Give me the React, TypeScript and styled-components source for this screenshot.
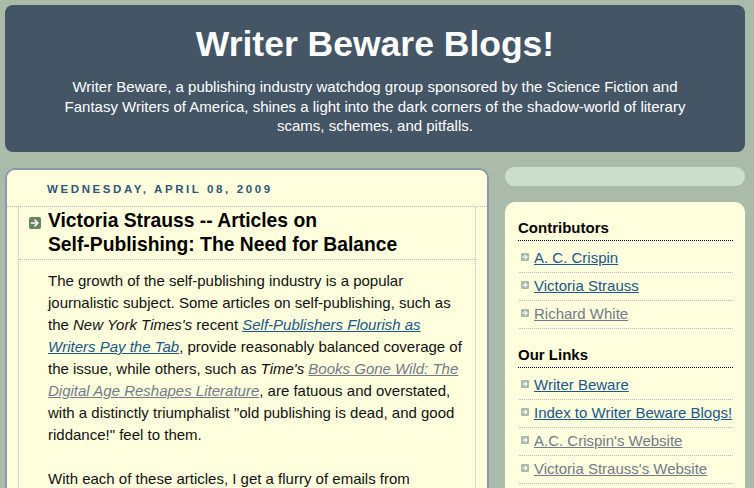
import React from "react";
import styled, { createGlobalStyle } from "styled-components";

const GlobalStyle = createGlobalStyle`
  body {
    margin: 0;
    background: #aabbaa;
    font-family: "Liberation Sans", Arial, sans-serif;
  }
`;

interface ILink {
  label: string;
  visited?: boolean;
}

const contributors: ILink[] = [
  { label: "A. C. Crispin" },
  { label: "Victoria Strauss" },
  { label: "Richard White", visited: true },
];

const ourLinks: ILink[] = [
  { label: "Writer Beware" },
  { label: "Index to Writer Beware Blogs!" },
  { label: "A.C. Crispin's Website", visited: true },
  { label: "Victoria Strauss's Website", visited: true },
];

const ArrowIcon: React.FC<{ size: number; color: string }> = ({ size, color }) => (
  <svg width={size} height={size} viewBox="0 0 12 12">
    <rect x="0" y="0" width="12" height="12" rx="2" fill={color} />
    <path
      d="M2.5 6h6M6 3.2L8.8 6 6 8.8"
      stroke="#fff"
      strokeWidth="1.7"
      fill="none"
      strokeLinecap="round"
      strokeLinejoin="round"
    />
  </svg>
);

const Widget: React.FC<{ title: string; links: ILink[] }> = ({ title, links }) => (
  <WidgetWrap>
    <WidgetTitle>{title}</WidgetTitle>
    <LinkList>
      {links.map((link) => (
        <LinkItem key={link.label}>
          <ItemIcon>
            <ArrowIcon size={8} color="#a9b9a7" />
          </ItemIcon>
          <Link href="#" $visited={link.visited}>
            {link.label}
          </Link>
        </LinkItem>
      ))}
    </LinkList>
  </WidgetWrap>
);

const App: React.FC = () => {
  return (
    <Page>
      <GlobalStyle />
      <Header>
        <BlogTitle>Writer Beware Blogs!</BlogTitle>
        <Description>
          Writer Beware, a publishing industry watchdog group sponsored by the
          Science Fiction and Fantasy Writers of America, shines a light into
          the dark corners of the shadow-world of literary scams, schemes, and
          pitfalls.
        </Description>
      </Header>
      <Columns>
        <Main>
          <DateHeader>Wednesday, April 08, 2009</DateHeader>
          <Post>
            <PostTitle>
              <TitleIcon>
                <ArrowIcon size={12} color="#66855f" />
              </TitleIcon>
              <span>
                Victoria Strauss -- Articles on <NoWrap>Self-Publishing:</NoWrap>{" "}
                The Need for Balance
              </span>
            </PostTitle>
            <PostBody>
              <p>
                The growth of the self-publishing industry is a popular
                journalistic subject. Some articles on self-publishing, such as
                the <em>New York Times's</em> recent{" "}
                <Link href="#">
                  <em>Self-Publishers Flourish as Writers Pay the Tab</em>
                </Link>
                , provide reasonably balanced coverage of the issue, while
                others, such as <em>Time's</em>{" "}
                <Link href="#" $visited>
                  <em>Books Gone Wild: The Digital Age Reshapes Literature</em>
                </Link>
                , are fatuous and overstated, with a distinctly triumphalist
                "old publishing is dead, and good riddance!" feel to them.
              </p>
              <p>With each of these articles, I get a flurry of emails from</p>
            </PostBody>
          </Post>
        </Main>
        <Sidebar>
          <Pill />
          <SidebarBox>
            <Widget title="Contributors" links={contributors} />
            <Widget title="Our Links" links={ourLinks} />
          </SidebarBox>
        </Sidebar>
      </Columns>
    </Page>
  );
};

const Page = styled.div`
  width: 740px;
  padding: 5px 0 0 5px;
`;

const Header = styled.header`
  box-sizing: border-box;
  height: 147px;
  padding: 18px 20px 0;
  background: #445566;
  border-radius: 8px;
  color: #fff;
  text-align: center;
`;

const BlogTitle = styled.h1`
  margin: 0;
  font-size: 35.5px;
  line-height: 42px;
  font-weight: bold;
`;

const Description = styled.p`
  max-width: 640px;
  margin: 12px auto 0;
  font-size: 15px;
  line-height: 19.5px;
`;

const Columns = styled.div`
  display: flex;
  align-items: flex-start;
  gap: 16px;
  margin-top: 15px;
`;

const Main = styled.main`
  box-sizing: border-box;
  width: 484px;
  margin-top: 1px;
  padding-bottom: 40px;
  background: #ffffdd;
  border: 2px solid #8b99ad;
  border-radius: 10px;
`;

const DateHeader = styled.h2`
  margin: 0;
  padding: 10px 0 8px 40px;
  font-size: 11.5px;
  line-height: 18px;
  font-weight: bold;
  letter-spacing: 2.6px;
  text-transform: uppercase;
  color: #335577;
  border-bottom: 1px dotted #bbbbbb;
`;

const Post = styled.article`
  margin: 0 11px;
  border-left: 1px dotted #bbbbbb;
  border-right: 1px dotted #bbbbbb;
`;

const PostTitle = styled.h3`
  display: flex;
  align-items: flex-start;
  gap: 7px;
  margin: 0;
  padding: 2px 12px 2px 10px;
  font-size: 19.3px;
  line-height: 24px;
  font-weight: bold;
  color: #000;
  border-bottom: 1px dotted #bbbbbb;
`;

const NoWrap = styled.span`
  white-space: nowrap;
`;

const TitleIcon = styled.span`
  display: flex;
  flex-shrink: 0;
  margin-top: 8px;
`;

const PostBody = styled.div`
  padding: 10px 13px 0 29px;
  font-size: 15px;
  line-height: 22px;
  color: #111;

  p {
    margin: 0 0 22px;
  }
`;

const Link = styled.a<{ $visited?: boolean }>`
  color: ${({ $visited }) => ($visited ? "#737a8a" : "#225588")};
  text-decoration: underline;
`;

const Sidebar = styled.aside`
  display: flex;
  flex-direction: column;
  gap: 16px;
  width: 240px;
`;

const Pill = styled.div`
  height: 19px;
  background: #ccddcc;
  border-radius: 10px;
`;

const SidebarBox = styled.div`
  padding: 0 12px 30px 14px;
  background: #ffffdd;
  border-radius: 10px;
`;

const WidgetWrap = styled.section`
  padding-top: 16px;
`;

const WidgetTitle = styled.h2`
  margin: 0 0 0 -1px;
  padding-bottom: 2px;
  font-size: 15px;
  line-height: 20px;
  font-weight: bold;
  color: #000;
  border-bottom: 1px dotted #000;
`;

const LinkList = styled.ul`
  margin: 4px 0 0;
  padding: 0;
  list-style: none;
`;

const LinkItem = styled.li`
  display: flex;
  align-items: flex-start;
  gap: 5px;
  padding: 3px 0 4px 2px;
  font-size: 15px;
  line-height: 20px;
  border-bottom: 1px dotted #bbbbbb;
`;

const ItemIcon = styled.span`
  display: flex;
  flex-shrink: 0;
  margin-top: 5px;
`;

export default App;
